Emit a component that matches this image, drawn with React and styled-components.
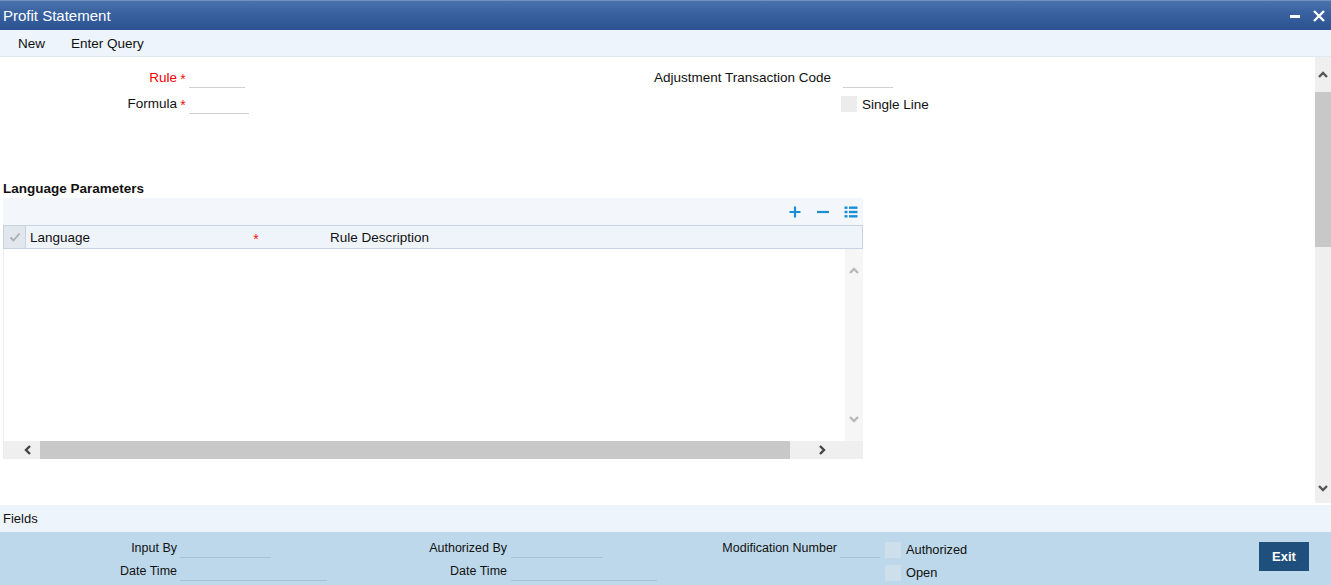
import React from "react";
import styled, { createGlobalStyle } from "styled-components";

const GlobalStyle = createGlobalStyle`
	html, body {
		margin: 0;
		padding: 0;
		background: #fff;
	}
	body {
		font-family: "Liberation Sans", Arial, sans-serif;
		font-size: 13px;
		color: #000;
	}
`;

const Screen = styled.div`
	width: 1331px;
	height: 585px;
	display: flex;
	flex-direction: column;
	overflow: hidden;
`;

const TitleBar = styled.div`
	height: 30px;
	flex: none;
	display: flex;
	align-items: center;
	justify-content: space-between;
	padding: 0 6px 0 3px;
	background: linear-gradient(#4a72ad 0%, #3a62a0 40%, #2b5292 100%);
	border-top: 1px solid #6f8fc0;
	box-sizing: border-box;
	color: #fff;
	font-size: 15px;
`;

const WinButtons = styled.div`
	display: flex;
	align-items: center;
	gap: 13px;
`;

const MenuBar = styled.div`
	height: 27px;
	flex: none;
	display: flex;
	align-items: center;
	gap: 26px;
	padding-left: 18px;
	background: #eef4fc;
	border-bottom: 1px solid #e2e8f0;
	box-sizing: border-box;
	font-size: 13.5px;
	color: #111;
`;

const Main = styled.div`
	flex: 1;
	display: flex;
	min-height: 0;
`;

const Content = styled.div`
	flex: 1;
	padding-top: 7px;
`;

const PageScroll = styled.div`
	width: 16px;
	flex: none;
	background: #efefef;
	display: flex;
	flex-direction: column;
	align-items: center;
`;

const ScrollArrow = styled.div`
	height: ${(p) => p.$h || 18}px;
	width: ${(p) => (p.$w ? `${p.$w}px` : "auto")};
	padding-left: ${(p) => p.$pl || 0}px;
	box-sizing: border-box;
	display: flex;
	align-items: center;
	justify-content: center;
	flex: none;
`;

const PageThumb = styled.div`
	width: 100%;
	height: 155px;
	background: #c8c8c8;
	flex: none;
`;

const Spacer = styled.div`
	flex: 1;
`;

const TopForm = styled.div`
	display: flex;
	height: 116px;
`;

const LeftFields = styled.div`
	width: 600px;
	display: flex;
	flex-direction: column;
`;

const RightFields = styled.div`
	display: flex;
	flex-direction: column;
`;

const FieldRow = styled.div`
	height: 26px;
	display: flex;
	align-items: center;
`;

const Label = styled.span`
	width: ${(p) => p.$w || 177}px;
	text-align: right;
	font-size: 13.5px;
	color: ${(p) => (p.$red ? "#f00000" : "#111")};
	flex: none;
`;

const Star = styled.span`
	width: 12px;
	color: #f01010;
	font-size: 14px;
	line-height: 14px;
	text-align: center;
	flex: none;
	position: relative;
	top: 2px;
`;

const Input = styled.div`
	width: ${(p) => p.$w}px;
	height: 22px;
	margin-left: ${(p) => p.$ml || 0}px;
	border-bottom: 1px solid #d0d0d0;
	box-sizing: border-box;
	align-self: flex-start;
	margin-top: 2px;
	flex: none;
`;

const CheckRow = styled.label`
	display: flex;
	align-items: center;
	gap: 5px;
	height: ${(p) => p.$h || 24}px;
	margin-left: ${(p) => p.$ml || 0}px;
	margin-top: ${(p) => p.$mt || 0}px;
	font-size: 13.5px;
	color: #111;
`;

const Box = styled.span`
	width: 16px;
	height: 16px;
	background: ${(p) => p.$bg || "#ececec"};
	flex: none;
`;

const SectionTitle = styled.div`
	margin-left: 3px;
	font-size: 13.5px;
	font-weight: bold;
	color: #111;
	height: 18px;
	line-height: 17px;
`;

const Panel = styled.div`
	margin-left: 3px;
	width: 860px;
	display: flex;
	flex-direction: column;
`;

const PanelTools = styled.div`
	height: 27px;
	background: #f3f7fc;
	display: flex;
	align-items: center;
	justify-content: flex-end;
	gap: 14px;
	padding-right: 5px;
`;

const HeaderRow = styled.div`
	height: 24px;
	display: flex;
	align-items: center;
	background: #eff4fa;
	border: 1px solid #c7d3e1;
	box-sizing: border-box;
	font-size: 13.5px;
	color: #111;
`;

const CheckCell = styled.div`
	width: 21px;
	height: 100%;
	background: #e2e7ed;
	display: flex;
	align-items: center;
	justify-content: center;
	border-right: 1px solid #c7d3e1;
	flex: none;
`;

const HeadCell = styled.div`
	width: ${(p) => p.$w}px;
	padding-left: ${(p) => p.$pl || 0}px;
	flex: none;
	display: flex;
	align-items: center;
`;

const TableBody = styled.div`
	height: 192px;
	display: flex;
	border-left: 1px solid #e8eef6;
`;

const BodyCells = styled.div`
	flex: 1;
`;

const InnerVScroll = styled.div`
	width: 18px;
	background: #f6f6f6;
	display: flex;
	flex-direction: column;
	align-items: center;
	justify-content: space-between;
	padding: 16px 0 16px;
	box-sizing: border-box;
`;

const HScroll = styled.div`
	height: 18px;
	display: flex;
	align-items: center;
	background: #efefef;
	border-left: 1px solid #e8eef6;
`;

const HThumb = styled.div`
	width: 750px;
	height: 100%;
	background: #c8c8c8;
`;

const FieldsBar = styled.div`
	height: 27px;
	flex: none;
	margin-top: 2px;
	background: #eef4fc;
	display: flex;
	align-items: center;
	padding-left: 3px;
	font-size: 13px;
	color: #111;
`;

const Footer = styled.div`
	height: 53px;
	flex: none;
	background: #bdd8ea;
	display: flex;
	align-items: flex-start;
	padding-top: 4px;
	box-sizing: border-box;
`;

const AuditCol = styled.div`
	width: ${(p) => p.$w}px;
	display: flex;
	flex-direction: column;
	flex: none;
`;

const AuditRow = styled.div`
	height: 23px;
	display: flex;
	align-items: center;
`;

const AuditLabel = styled.span`
	width: 177px;
	text-align: right;
	font-size: 12.5px;
	color: #111;
	flex: none;
`;

const AuditLine = styled.div`
	width: ${(p) => p.$w}px;
	margin-left: ${(p) => p.$ml || 3}px;
	height: 21px;
	align-self: flex-start;
	border-bottom: 1px solid #a9c2d3;
	flex: none;
`;

const StatusCol = styled.div`
	display: flex;
	flex-direction: column;
	margin-left: 5px;
	margin-top: 2px;
`;

const StatusCheck = styled(CheckRow)`
	font-size: 12.8px;
	height: 23px;
`;

const ExitButton = styled.button`
	margin: 6px 22px 0 auto;
	width: 50px;
	height: 29px;
	border: none;
	background: #1f4f7c;
	color: #fff;
	font-family: inherit;
	font-weight: bold;
	font-size: 13px;
	cursor: pointer;
`;

const Chevron = ({ dir = "up", color = "#555", size = 11 }) => {
	const paths = {
		up: "M2 8 L6 4 L10 8",
		down: "M2 4 L6 8 L10 4",
		left: "M8 2 L4 6 L8 10",
		right: "M4 2 L8 6 L4 10",
	};
	return (
		<svg width={size} height={size} viewBox="0 0 12 12">
			<path d={paths[dir]} fill="none" stroke={color} strokeWidth="2.4" />
		</svg>
	);
};

const ToolIcon = ({ kind }) => (
	<svg width="14" height="14" viewBox="0 0 14 14">
		{kind === "plus" && (
			<path d="M7 1.5 V12.5 M1.5 7 H12.5" stroke="#1a8fd3" strokeWidth="2.2" />
		)}
		{kind === "minus" && <path d="M1 7 H13" stroke="#1a8fd3" strokeWidth="2.2" />}
		{kind === "list" && (
			<g fill="#1a8fd3">
				<rect x="0.5" y="1.5" width="3" height="2.4" />
				<rect x="0.5" y="5.8" width="3" height="2.4" />
				<rect x="0.5" y="10.1" width="3" height="2.4" />
				<rect x="5" y="1.5" width="8.5" height="2.4" />
				<rect x="5" y="5.8" width="8.5" height="2.4" />
				<rect x="5" y="10.1" width="8.5" height="2.4" />
			</g>
		)}
	</svg>
);

const App = () => {
	return (
		<Screen>
			<GlobalStyle />
			<TitleBar>
				<span>Profit Statement</span>
				<WinButtons>
					<svg width="10" height="10" viewBox="0 0 10 10">
						<rect x="0" y="4" width="10" height="3" fill="#fff" />
					</svg>
					<svg width="12" height="12" viewBox="0 0 12 12">
						<path d="M1 1 L11 11 M11 1 L1 11" stroke="#fff" strokeWidth="2.4" />
					</svg>
				</WinButtons>
			</TitleBar>
			<MenuBar>
				<span>New</span>
				<span>Enter Query</span>
			</MenuBar>
			<Main>
				<Content>
					<TopForm>
						<LeftFields>
							<FieldRow>
								<Label $red>Rule</Label>
								<Star>*</Star>
								<Input $w={56} />
							</FieldRow>
							<FieldRow>
								<Label>Formula</Label>
								<Star>*</Star>
								<Input $w={60} />
							</FieldRow>
						</LeftFields>
						<RightFields>
							<FieldRow>
								<Label $w={231}>Adjustment Transaction Code</Label>
								<Input $w={50} $ml={12} />
							</FieldRow>
							<CheckRow $ml={241} $mt={2}>
								<Box />
								Single Line
							</CheckRow>
						</RightFields>
					</TopForm>
					<SectionTitle>Language Parameters</SectionTitle>
					<Panel>
						<PanelTools>
							<ToolIcon kind="plus" />
							<ToolIcon kind="minus" />
							<ToolIcon kind="list" />
						</PanelTools>
						<HeaderRow>
							<CheckCell>
								<svg width="12" height="12" viewBox="0 0 12 12">
									<path d="M1.5 6.5 L4.5 9.5 L10.5 2.5" fill="none" stroke="#a8adb3" strokeWidth="1.8" />
								</svg>
							</CheckCell>
							<HeadCell $w={220} $pl={4}>Language</HeadCell>
							<HeadCell $w={80}>
								<Star>*</Star>
							</HeadCell>
							<HeadCell $w={300}>Rule Description</HeadCell>
						</HeaderRow>
						<TableBody>
							<BodyCells />
							<InnerVScroll>
								<Chevron dir="up" color="#b8b8b8" size={12} />
								<Chevron dir="down" color="#b8b8b8" size={12} />
							</InnerVScroll>
						</TableBody>
						<HScroll>
							<ScrollArrow $w={36} $pl={12}>
								<Chevron dir="left" color="#444" size={12} />
							</ScrollArrow>
							<HThumb />
							<ScrollArrow $w={64}>
								<Chevron dir="right" color="#444" size={12} />
							</ScrollArrow>
						</HScroll>
					</Panel>
				</Content>
				<PageScroll>
					<ScrollArrow $h={35}>
						<Chevron dir="up" color="#555" size={12} />
					</ScrollArrow>
					<PageThumb />
					<Spacer />
					<ScrollArrow $h={30}>
						<Chevron dir="down" color="#555" size={12} />
					</ScrollArrow>
				</PageScroll>
			</Main>
			<FieldsBar>Fields</FieldsBar>
			<Footer>
				<AuditCol $w={330}>
					<AuditRow>
						<AuditLabel>Input By</AuditLabel>
						<AuditLine $w={91} />
					</AuditRow>
					<AuditRow>
						<AuditLabel>Date Time</AuditLabel>
						<AuditLine $w={147} />
					</AuditRow>
				</AuditCol>
				<AuditCol $w={330}>
					<AuditRow>
						<AuditLabel>Authorized By</AuditLabel>
						<AuditLine $w={92} $ml={4} />
					</AuditRow>
					<AuditRow>
						<AuditLabel>Date Time</AuditLabel>
						<AuditLine $w={146} $ml={4} />
					</AuditRow>
				</AuditCol>
				<AuditCol $w={220}>
					<AuditRow>
						<AuditLabel>Modification Number</AuditLabel>
						<AuditLine $w={40} />
					</AuditRow>
				</AuditCol>
				<StatusCol>
					<StatusCheck>
						<Box $bg="#cddfeb" />
						Authorized
					</StatusCheck>
					<StatusCheck>
						<Box $bg="#cddfeb" />
						Open
					</StatusCheck>
				</StatusCol>
				<ExitButton>Exit</ExitButton>
			</Footer>
		</Screen>
	);
};

export default App;
